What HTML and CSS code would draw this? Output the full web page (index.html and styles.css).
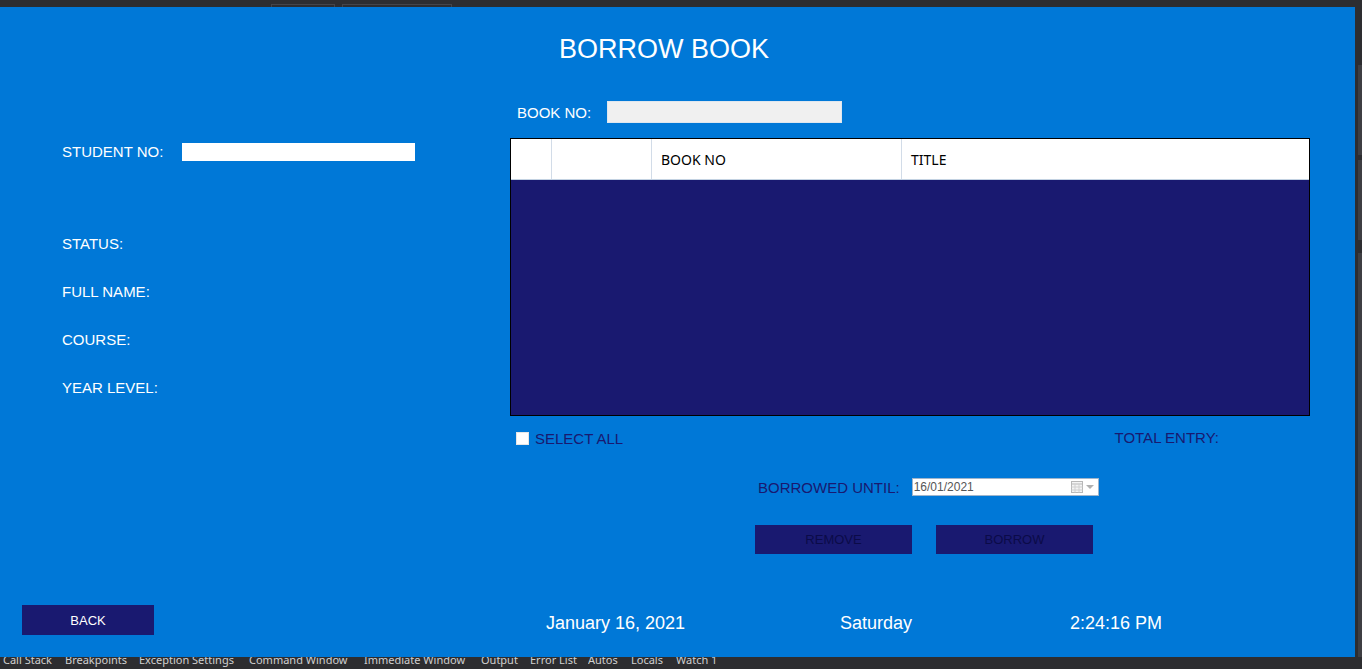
FILE: index.html
```html
<!DOCTYPE html>
<html>
<head>
<meta charset="utf-8">
<link rel="stylesheet" href="styles.css">
</head>
<body>
<div class="topbar">
  <span class="ttab t1"></span>
  <span class="ttab t2"></span>
</div>
<div class="middle">
  <div class="window">
    <h1 class="title">BORROW BOOK</h1>
    <div class="main">
      <div class="left">
        <div class="student-row">
          <span class="label student-label">STUDENT NO:</span>
          <div class="input student-input"></div>
        </div>
        <div class="info-list">
          <span class="label info">STATUS:</span>
          <span class="label info">FULL NAME:</span>
          <span class="label info">COURSE:</span>
          <span class="label info">YEAR LEVEL:</span>
        </div>
      </div>
      <div class="right">
        <div class="book-row">
          <span class="label book-label">BOOK NO:</span>
          <div class="input book-input"></div>
        </div>
        <div class="grid">
          <div class="grid-head">
            <div class="col c1"></div>
            <div class="col c2"></div>
            <div class="col c3">BOOK NO</div>
            <div class="col c4">TITLE</div>
          </div>
          <div class="grid-body"></div>
        </div>
        <div class="select-row">
          <span class="check"></span>
          <span class="dark-label select-label">SELECT ALL</span>
          <span class="dark-label total">TOTAL ENTRY:</span>
        </div>
        <div class="until-row">
          <span class="dark-label">BORROWED UNTIL:</span>
          <div class="datepicker">
            <span class="date-text">16/01/2021</span>
            <svg class="cal" width="12" height="12" viewBox="0 0 12 12">
              <rect x="0.5" y="0.5" width="11" height="11" fill="#f4f4f4" stroke="#b8b8b8"/>
              <line x1="0.5" y1="3" x2="11.5" y2="3" stroke="#b8b8b8"/>
              <line x1="4" y1="3" x2="4" y2="11.5" stroke="#d0d0d0"/>
              <line x1="8" y1="3" x2="8" y2="11.5" stroke="#d0d0d0"/>
              <line x1="0.5" y1="6" x2="11.5" y2="6" stroke="#d0d0d0"/>
              <line x1="0.5" y1="9" x2="11.5" y2="9" stroke="#d0d0d0"/>
            </svg>
            <svg class="arrow" width="8" height="5" viewBox="0 0 8 5">
              <path d="M0 0 L8 0 L4 4 Z" fill="#b0b0b0"/>
            </svg>
          </div>
        </div>
        <div class="btn-row">
          <button class="btn dark-btn">REMOVE</button>
          <button class="btn dark-btn">BORROW</button>
        </div>
      </div>
    </div>
    <div class="footer">
      <button class="btn back">BACK</button>
      <span class="foot-text f-date">January 16, 2021</span>
      <span class="foot-text f-day">Saturday</span>
      <span class="foot-text f-time">2:24:16 PM</span>
    </div>
  </div>
  <div class="scroll">
    <div class="sb s1"></div>
    <div class="sb s2"></div>
    <div class="sb s3"></div>
  </div>
</div>
<div class="bottombar">
  <span class="btab" style="width:62px">Call Stack</span>
  <span class="btab" style="width:74px">Breakpoints</span>
  <span class="btab" style="width:110px">Exception Settings</span>
  <span class="btab" style="width:115px">Command Window</span>
  <span class="btab" style="width:117px">Immediate Window</span>
  <span class="btab" style="width:49px">Output</span>
  <span class="btab" style="width:58px">Error List</span>
  <span class="btab" style="width:43px">Autos</span>
  <span class="btab" style="width:45px">Locals</span>
  <span class="btab" style="width:60px">Watch 1</span>
</div>
</body>
</html>
```
FILE: styles.css
```css
* { box-sizing: border-box; }
html, body {
  margin: 0;
  padding: 0;
}
body {
  width: 1362px;
  height: 669px;
  overflow: hidden;
  background: #2d2d30;
  font-family: "Liberation Sans", Arial, sans-serif;
}
.topbar {
  height: 7px;
  display: flex;
  align-items: flex-end;
  background: #2d2d30;
}
.ttab {
  height: 3px;
  border: 1px solid #45454a;
  border-bottom: none;
}
.t1 { margin-left: 271px; width: 64px; }
.t2 { margin-left: 7px; width: 110px; }

.middle {
  display: flex;
  height: 650px;
}
.window {
  width: 1355px;
  height: 650px;
  background: #0078d7;
  display: flex;
  flex-direction: column;
}
.scroll {
  width: 7px;
  height: 650px;
  background: #2d2d30;
  display: flex;
  flex-direction: column;
  align-items: flex-end;
}
.sb { width: 4px; background: #3e3e42; }
.s1 { margin-top: 58px; height: 90px; }
.s2 { margin-top: 5px; height: 80px; }
.s3 { margin-top: 13px; flex: 1; }

.title {
  margin: 0;
  padding: 26px 0 0 559px;
  font-weight: normal;
  font-size: 27px;
  line-height: 32px;
  height: 58px;
  color: #ffffff;
}
.main {
  display: flex;
  margin-top: 36px;
}
.label {
  color: #ffffff;
  font-size: 15px;
}
.dark-label {
  color: #191970;
  font-size: 15px;
}
.left {
  width: 510px;
  padding-left: 62px;
  display: flex;
  flex-direction: column;
}
.student-row {
  margin-top: 42px;
  height: 18px;
  display: flex;
  align-items: center;
}
.student-label { width: 120px; line-height: 16px; margin-top: -1px; }
.input { background: #ffffff; }
.student-input { width: 233px; height: 18px; }
.info-list {
  margin-top: 73px;
  display: flex;
  flex-direction: column;
  gap: 28px;
}
.info { line-height: 20px; height: 20px; }

.right {
  width: 800px;
  display: flex;
  flex-direction: column;
}
.book-row {
  height: 22px;
  display: flex;
  align-items: center;
  padding-left: 7px;
}
.book-label { width: 90px; padding-top: 1px; }
.book-input {
  width: 235px;
  height: 22px;
  background: #f0f0f0;
  border: 1px solid #dfe7ef;
}
.grid {
  margin-top: 15px;
  width: 800px;
  height: 278px;
  border: 1px solid #000000;
  display: flex;
  flex-direction: column;
}
.grid-head {
  height: 41px;
  background: #ffffff;
  display: flex;
  border-bottom: 1px solid #c3d2e2;
}
.col {
  height: 40px;
  font-family: "Noto Sans", "Open Sans", sans-serif;
  font-size: 14px;
  line-height: 42px;
  color: #000000;
  padding-left: 9px;
  border-right: 1px solid #d2dce8;
}
.c1 { width: 41px; }
.c2 { width: 100px; }
.c3 { width: 250px; }
.c4 { flex: 1; border-right: none; }
.grid-body {
  flex: 1;
  background: #191970;
}
.select-row {
  margin-top: 14px;
  height: 16px;
  display: flex;
  align-items: center;
  padding-left: 6px;
}
.check {
  width: 13px;
  height: 13px;
  background: #ffffff;
  border: 1px solid #e6e6e6;
}
.select-label { margin-left: 6px; }
.total { margin-left: auto; margin-right: 91px; margin-top: -2px; }
.until-row {
  margin-top: 32px;
  height: 18px;
  display: flex;
  align-items: center;
  padding-left: 248px;
}
.datepicker {
  margin-left: 12px;
  width: 187px;
  height: 18px;
  background: #ffffff;
  border: 1px solid #9fb5cc;
  display: flex;
  align-items: center;
  padding-left: 1px;
}
.date-text {
  font-size: 12px;
  color: #555555;
}
.cal { margin-left: auto; }
.arrow { margin-left: 3px; margin-right: 4px; }
.btn-row {
  margin-top: 29px;
  display: flex;
  gap: 24px;
  padding-left: 245px;
}
.btn {
  border: none;
  margin: 0;
  padding: 0;
  font-family: "Liberation Sans", Arial, sans-serif;
  font-size: 13px;
  background: #191970;
}
.dark-btn {
  width: 157px;
  height: 29px;
  color: #0b0b48;
}
.footer {
  margin-top: auto;
  padding: 0 0 22px 22px;
  display: flex;
  align-items: center;
}
.back {
  width: 132px;
  height: 30px;
  color: #ffffff;
}
.foot-text {
  color: #ffffff;
  font-size: 18px;
  padding-top: 6px;
}
.f-date { margin-left: 392px; width: 294px; }
.f-day { width: 230px; }

.bottombar {
  height: 12px;
  overflow: hidden;
  display: flex;
  background: #2d2d30;
  padding-left: 3px;
}
.btab {
  display: block;
  font-family: "Noto Sans", "Open Sans", sans-serif;
  font-size: 11px;
  line-height: 12px;
  margin-top: -3px;
  color: #d0d0d0;
  white-space: nowrap;
  overflow: hidden;
}
```
